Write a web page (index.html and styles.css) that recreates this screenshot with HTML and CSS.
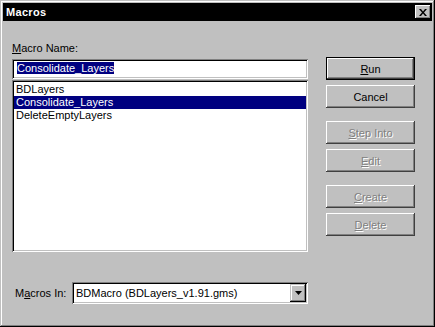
FILE: index.html
```html
<!DOCTYPE html>
<html lang="en">
<head>
  <meta charset="UTF-8">
  <title>Macros</title>
  <link rel="stylesheet" href="styles.css">
</head>
<body>
  <div class="window">
    <div class="titlebar">
      <span class="title">Macros</span>
      <button class="close" type="button">
        <svg width="8" height="7" viewBox="0 0 8 7">
          <path d="M0 0h2l2 2.5L6 0h2L5 3.5 8 7H6L4 4.5 2 7H0l3-3.5z" fill="#000"/>
        </svg>
      </button>
    </div>
    <div class="content">
      <div class="main">
        <div class="left">
          <div class="label"><u>M</u>acro Name:</div>
          <div class="name-field"><span class="sel">Consolidate_Layers</span></div>
          <ul class="list">
            <li>BDLayers</li>
            <li class="selected">Consolidate_Layers</li>
            <li>DeleteEmptyLayers</li>
          </ul>
        </div>
        <div class="buttons">
          <button class="btn default" type="button"><u>R</u>un</button>
          <button class="btn" type="button">Cancel</button>
          <button class="btn disabled spaced" type="button"><u>S</u>tep Into</button>
          <button class="btn disabled" type="button"><u>E</u>dit</button>
          <button class="btn disabled spaced" type="button"><u>C</u>reate</button>
          <button class="btn disabled" type="button"><u>D</u>elete</button>
        </div>
      </div>
      <div class="macros-in">
        <div class="label">M<u>a</u>cros In:</div>
        <div class="combo">
          <span class="combo-text">BDMacro (BDLayers_v1.91.gms)</span>
          <span class="combo-arrow">
            <svg width="7" height="4" viewBox="0 0 7 4"><path d="M0 0h7L3.5 4z" fill="#000"/></svg>
          </span>
        </div>
      </div>
    </div>
  </div>
</body>
</html>
```

FILE: styles.css
```css
body {
  margin: 0;
  padding: 0;
  background: #c0c0c0;
  font-family: "Liberation Sans", Arial, sans-serif;
  font-size: 11px;
  color: #000;
}

.window {
  width: 435px;
  height: 327px;
  box-sizing: border-box;
  padding: 3px;
  background: #c0c0c0;
  box-shadow: inset -1px -1px #000, inset 1px 1px #c0c0c0,
              inset -2px -2px #808080, inset 2px 2px #fff;
}

.titlebar {
  height: 18px;
  background: #000;
  display: flex;
  align-items: center;
  justify-content: space-between;
  padding: 0 1px 0 3px;
}

.title {
  color: #fff;
  font-weight: bold;
  font-size: 11px;
  letter-spacing: 0.3px;
}

.close {
  width: 16px;
  height: 14px;
  padding: 0;
  border: none;
  background: #c0c0c0;
  display: flex;
  align-items: center;
  justify-content: center;
  box-shadow: inset -1px -1px #000, inset 1px 1px #fff, inset -2px -2px #808080;
}

.content {
  padding: 21px 0 0 9px;
}

.main {
  display: flex;
}

.left {
  width: 296px;
}

.label {
  height: 13px;
  line-height: 13px;
}

.name-field {
  margin-top: 4px;
  height: 20px;
  box-sizing: border-box;
  background: #fff;
  padding: 3px 0 0 5px;
  line-height: 13px;
  box-shadow: inset 1px 1px #808080, inset -1px -1px #fff,
              inset 2px 2px #000, inset -2px -2px #c0c0c0;
}

.sel {
  background: #000080;
  color: #fff;
  display: inline-block;
  height: 12px;
  line-height: 12px;
}

.list {
  list-style: none;
  margin: 1px 0 0;
  padding: 3px 2px 0;
  height: 172px;
  box-sizing: border-box;
  background: #fff;
  box-shadow: inset 1px 1px #808080, inset -1px -1px #fff,
              inset 2px 2px #000, inset -2px -2px #c0c0c0;
}

.list li {
  height: 13px;
  line-height: 13px;
  padding-left: 2px;
}

.list li.selected {
  background: #000080;
  color: #fff;
}

.buttons {
  margin-left: 18px;
  padding-top: 15px;
  width: 89px;
  display: flex;
  flex-direction: column;
  gap: 5px;
}

.btn {
  height: 23px;
  width: 89px;
  padding: 0;
  border: none;
  background: #c0c0c0;
  font-family: inherit;
  font-size: 11px;
  color: #000;
  box-shadow: inset -1px -1px #404040, inset 1px 1px #fff, inset -2px -2px #808080;
}

.btn.default {
  box-shadow: inset 0 0 0 1px #000, inset -2px -2px #404040,
              inset 2px 2px #fff, inset -3px -3px #808080;
}

.btn.spaced {
  margin-top: 8px;
}

.btn.disabled {
  color: #808080;
  text-shadow: 1px 1px #fff;
}

.macros-in {
  margin-top: 30px;
  display: flex;
  align-items: center;
  width: 296px;
}

.macros-in .label {
  width: 57px;
  padding-left: 3px;
}

.combo {
  width: 236px;
  height: 22px;
  box-sizing: border-box;
  background: #fff;
  display: flex;
  align-items: center;
  justify-content: space-between;
  padding: 2px;
  box-shadow: inset 1px 1px #808080, inset -1px -1px #fff,
              inset 2px 2px #000, inset -2px -2px #c0c0c0;
}

.combo-text {
  padding-left: 2px;
}

.combo-arrow {
  width: 16px;
  height: 18px;
  background: #c0c0c0;
  display: flex;
  align-items: center;
  justify-content: center;
  box-shadow: inset -1px -1px #000, inset 1px 1px #c0c0c0,
              inset -2px -2px #808080, inset 2px 2px #fff;
}
```
